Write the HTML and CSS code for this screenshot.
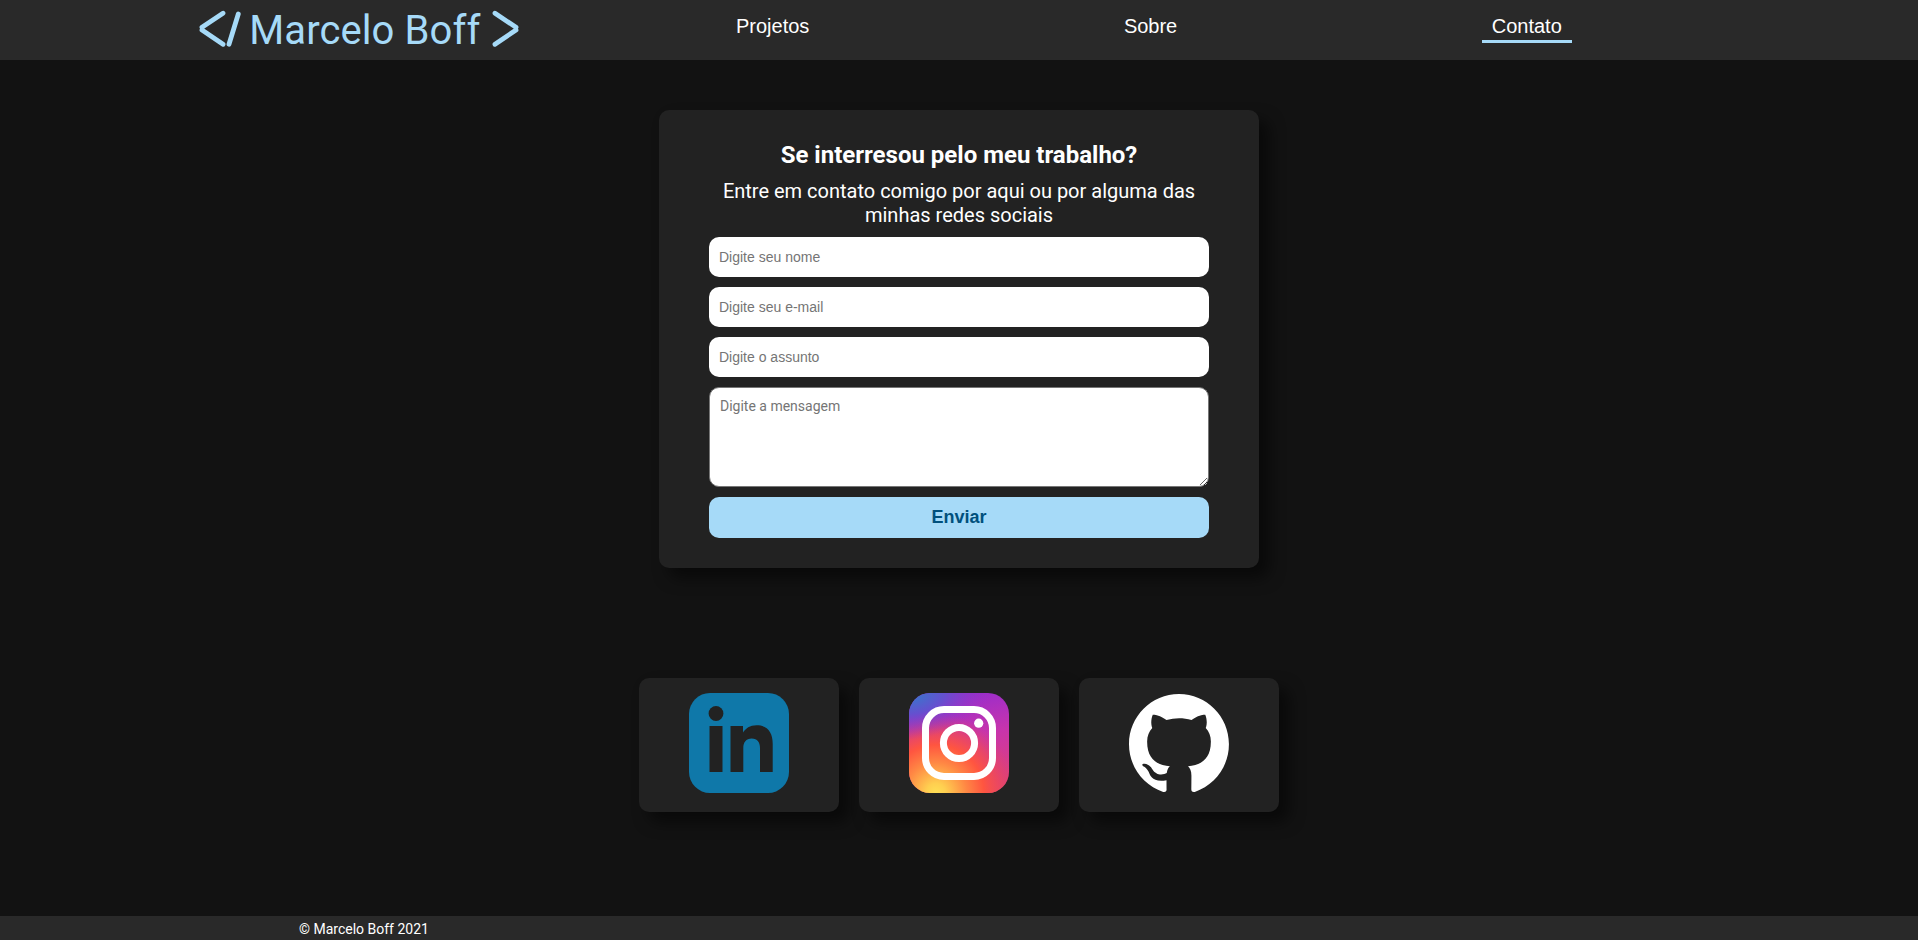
FILE: index.html
```html
<!DOCTYPE html>
<html lang="pt-BR">
<head>
<meta charset="utf-8">
<title>Marcelo Boff</title>
<link rel="stylesheet" href="styles.css">
</head>
<body>
<header class="header">
  <svg class="logo" width="322" height="60" viewBox="0 -8 322 60">
    <g class="logo-lines">
      <path d="M24 5.200 3 19.300M3 22 24 36.300M39.300 6 30 36.300M296 5.200 317 19.300M317 22 296 36.300"/>
    </g>
    <text class="logo-text" x="50.300" y="36" textLength="231">Marcelo Boff</text>
  </svg>
  <nav class="nav">
    <a class="nav-link">Projetos</a>
    <a class="nav-link">Sobre</a>
    <a class="nav-link active">Contato</a>
  </nav>
</header>
<main class="main">
  <form class="form">
    <h1 class="title">Se interresou pelo meu trabalho?</h1>
    <p class="lead">Entre em contato comigo por aqui ou por alguma das minhas redes sociais</p>
    <input class="field" type="text" placeholder="Digite seu nome">
    <input class="field" type="email" placeholder="Digite seu e-mail">
    <input class="field" type="text" placeholder="Digite o assunto">
    <textarea class="message" placeholder="Digite a mensagem"></textarea>
    <button class="send" type="button">Enviar</button>
  </form>
  <section class="social">
    <a class="card">
      <svg width="100" height="100" viewBox="0 0 100 100">
        <rect width="100" height="100" rx="21" fill="#0f78a9"/>
        <g fill="#222">
          <circle cx="27" cy="20.500" r="7.400"/>
          <path d="M20.500 33H33.500V79H20.500zM41.500 33H54V39.500C56.500 35.500 61 32.300 67.500 32.300C78.500 32.300 83.700 39.500 83.700 50.500V79H71V55C71 49.500 68.500 45.500 62.700 45.500C57 45.500 54.300 49.500 54.300 55V79H41.500z"/>
        </g>
      </svg>
    </a>
    <a class="card">
      <svg width="100" height="100" viewBox="0 0 100 100">
        <defs>
          <linearGradient id="base" x1=".7" y1="0" x2=".9" y2="1">
            <stop offset="0" stop-color="#9c2dca"/>
            <stop offset=".4" stop-color="#c834ac"/>
            <stop offset="1" stop-color="#e2446e"/>
          </linearGradient>
          <radialGradient id="warm" gradientUnits="userSpaceOnUse" cx="27" cy="100" r="80">
            <stop offset="0" stop-color="#ffdf55"/>
            <stop offset=".12" stop-color="#ffcf50"/>
            <stop offset=".38" stop-color="#ff8844"/>
            <stop offset=".6" stop-color="#ff5540"/>
            <stop offset=".78" stop-color="#f04a58" stop-opacity=".75"/>
            <stop offset="1" stop-color="#e04070" stop-opacity="0"/>
          </radialGradient>
          <radialGradient id="cool" gradientUnits="userSpaceOnUse" cx="0" cy="0" r="1" gradientTransform="translate(4 4) rotate(-10) scale(80 42)">
            <stop offset="0" stop-color="#3b74cc"/>
            <stop offset=".4" stop-color="#6550cf"/>
            <stop offset="1" stop-color="#9a30c8" stop-opacity="0"/>
          </radialGradient>
        </defs>
        <rect width="100" height="100" rx="21" fill="url(#base)"/>
        <rect width="100" height="100" rx="21" fill="url(#warm)"/>
        <rect width="100" height="100" rx="21" fill="url(#cool)"/>
        <rect x="16.500" y="16.500" width="67" height="67" rx="18.500" fill="none" stroke="#fff" stroke-width="7"/>
        <circle cx="50" cy="50" r="15.600" fill="none" stroke="#fff" stroke-width="7"/>
        <circle cx="69.700" cy="30.200" r="4.600" fill="#fff"/>
      </svg>
    </a>
    <a class="card">
      <svg width="100" height="100" viewBox="0 -1 97.700 98" preserveAspectRatio="none">
        <path fill="#fff" d="M48.854 0C21.839 0 0 22 0 49.217c0 21.756 13.993 40.172 33.405 46.690 2.427.490 3.316-1.059 3.316-2.362 0-1.141-.080-5.052-.080-9.127-13.590 2.934-16.420-5.867-16.420-5.867-2.184-5.704-5.420-7.170-5.420-7.170-4.448-3.015.324-3.015.324-3.015 4.934.326 7.523 5.052 7.523 5.052 4.367 7.496 11.404 5.378 14.235 4.074.404-3.178 1.699-5.378 3.074-6.600-10.839-1.141-22.243-5.378-22.243-24.283 0-5.378 1.940-9.778 5.014-13.200-.485-1.222-2.184-6.275.486-13.038 0 0 4.125-1.304 13.426 5.052a46.970 46.970 0 0 1 12.214-1.630c4.125 0 8.330.571 12.213 1.630 9.302-6.356 13.427-5.052 13.427-5.052 2.670 6.763.970 11.816.485 13.038 3.155 3.422 5.015 7.822 5.015 13.200 0 18.905-11.404 23.060-22.324 24.283 1.780 1.548 3.316 4.481 3.316 9.126 0 6.600-.080 11.897-.080 13.526 0 1.304.890 2.853 3.316 2.364 19.412-6.520 33.405-24.935 33.405-46.691C97.707 22 75.788 0 48.854 0z"/>
      </svg>
    </a>
  </section>
</main>
<footer class="footer">© Marcelo Boff 2021</footer>
</body>
</html>
```

FILE: styles.css
```css
* {
  box-sizing: border-box;
  margin: 0;
  padding: 0;
}

body {
  display: flex;
  flex-direction: column;
  height: 940px;
  background: #121212;
  color: #fff;
  font-family: Roboto, sans-serif;
}

.header {
  display: flex;
  align-items: flex-start;
  height: 60px;
  padding-left: 199px;
  background: #292929;
}

.logo {
  flex: none;
}

.logo-lines {
  fill: none;
  stroke: #a6daf8;
  stroke-width: 4.8;
  stroke-linecap: round;
}

.logo-text {
  fill: #a6daf8;
  font-size: 40px;
}

.nav {
  display: flex;
  gap: 294.5px;
  padding: 15px 0 0 205px;
  font: 20px/23px "Liberation Sans", Arial, sans-serif;
}

.nav-link {
  padding: 0 10px 2px;
  border-bottom: 3px solid transparent;
}

.nav-link.active {
  border-bottom-color: #a6daf8;
}

.main {
  display: flex;
  flex: 1;
  flex-direction: column;
  align-items: center;
  padding-top: 50px;
}

.form {
  display: flex;
  flex-direction: column;
  gap: 10px;
  width: 600px;
  height: 458px;
  padding: 31px 50px 30px;
  border-radius: 10px;
  background: #222;
  box-shadow: 10px 10px 15px rgba(0, 0, 0, 0.5);
}

.title {
  font-size: 24px;
  line-height: 28px;
  text-align: center;
}

.lead {
  height: 48px;
  font-size: 20px;
  line-height: 24px;
  text-align: center;
}

.field {
  height: 40px;
  padding: 10px;
  border: 0;
  border-radius: 10px;
  font: 14px "Liberation Sans", Arial, sans-serif;
}

.message {
  height: 100px;
  padding: 10px;
  border: 1px solid #767676;
  border-radius: 10px;
  font: 14px Roboto, sans-serif;
}

.send {
  height: 41px;
  border: 0;
  border-radius: 10px;
  background: #a6daf8;
  color: #00507d;
  font: bold 18px "Liberation Sans", Arial, sans-serif;
}

.social {
  display: flex;
  gap: 20px;
  margin-top: 110px;
}

.card {
  width: 200px;
  height: 134px;
  padding: 15px 50px;
  border-radius: 10px;
  background: #222;
  box-shadow: 10px 10px 15px rgba(0, 0, 0, 0.5);
}

.footer {
  height: 24px;
  padding-left: 299px;
  background: #292929;
  font-size: 14px;
  line-height: 27px;
}
```
